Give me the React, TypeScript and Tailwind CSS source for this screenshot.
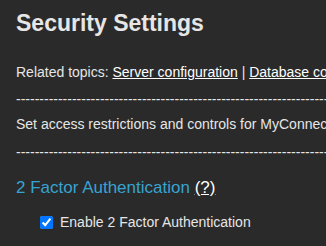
const dashes = "-".repeat(160);

export default function App() {
  return (
    <div className="h-screen w-full overflow-hidden bg-[#2a2a2a] pl-4 font-['Liberation_Sans',Arial,sans-serif] text-[14px] leading-[16px] text-[#e6e6e6] whitespace-nowrap">
      <h1 className="mt-[9px] text-[23px] font-bold leading-[28px] text-[#e6e6e6]">
        Security Settings
      </h1>
      <p className="mt-[27px]">
        Related topics:{" "}
        <a href="#" className="text-white underline">
          Server configuration
        </a>{" "}
        |{" "}
        <a href="#" className="text-white underline">
          Database configuration
        </a>
      </p>
      <div className="mt-[11px] overflow-hidden">{dashes}</div>
      <p className="mt-[9px]">
        Set access restrictions and controls for MyConnection Server.
      </p>
      <div className="mt-[12px] overflow-hidden">{dashes}</div>
      <h2 className="mt-[18px] text-[17px] leading-[20px] text-[#38a3d1]">
        2 Factor Authentication{" "}
        <a href="#" className="text-white underline">
          (?)
        </a>
      </h2>
      <label className="mt-[16px] ml-6 flex items-center">
        <input type="checkbox" defaultChecked className="m-0 h-[13px] w-[13px]" />
        <span className="ml-[7px]">Enable 2 Factor Authentication</span>
      </label>
    </div>
  );
}
